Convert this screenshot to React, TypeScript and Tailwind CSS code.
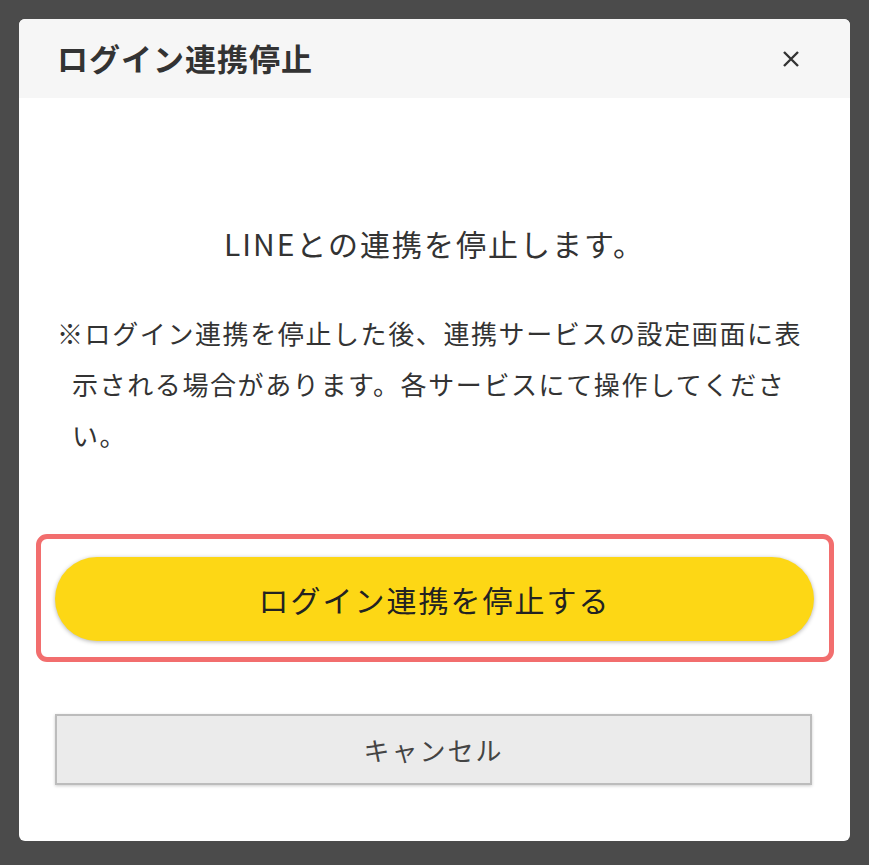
import React from "react";

export default function App() {
  const jp = { fontFamily: '"Noto Sans CJK JP", "Noto Sans", sans-serif' };
  return (
    <div className="min-h-[865px] w-[869px] bg-[#4b4b4b] pt-[19px] pl-[19px]" style={jp}>
      <div className="w-[831px] h-[822px] bg-white rounded-[6px] overflow-hidden flex flex-col">
        <div className="h-[79px] bg-[#f6f6f6] flex items-center justify-between pl-[38px] pr-[47px] shrink-0">
          <h1 className="text-[31px] font-bold text-[#333] tracking-[1px]">ログイン連携停止</h1>
          <button className="w-[24px] h-[24px] flex items-center justify-center text-[#333]" aria-label="閉じる">
            <svg width="18" height="18" viewBox="0 0 18 18" fill="none" stroke="#333" strokeWidth="2.4">
              <path d="M2 2 L16 16 M16 2 L2 16" />
            </svg>
          </button>
        </div>
        <div className="flex flex-col">
          <p className="pt-[125px] text-center text-[30px] leading-[40px] text-[#333] tracking-[2px]">LINEとの連携を停止します。</p>
          <p className="mt-[44px] pl-[38px] pr-[28px] text-[26px] leading-[51px] text-[#333] tracking-[1.6px]">
            <span className="block pl-[15px] -indent-[15px]">
              ※ログイン連携を停止した後、連携サービスの設定画面に表示される場合があります。各サービスにて操作してください。
            </span>
          </p>
          <div className="mt-[74px] ml-[17px] mr-[16px] border-[5px] border-[#f26e6e] rounded-[11px] pt-[18px] pb-[16px] pl-[14px] pr-[15px]">
            <button className="w-full h-[84px] rounded-full bg-[#fdd715] shadow-[0_1px_4px_rgba(0,0,0,0.3)] text-[30px] text-[#222] tracking-[2px] flex items-center justify-center">
              ログイン連携を停止する
            </button>
          </div>
          <div className="mt-[52px] ml-[36px] mr-[38px]">
            <button className="w-full h-[71px] bg-[#ebebeb] border-2 border-[#bcbcbc] shadow-[0_1px_3px_rgba(0,0,0,0.2)] text-[26px] text-[#444] tracking-[2px] flex items-center justify-center">
              キャンセル
            </button>
          </div>
        </div>
      </div>
    </div>
  );
}
